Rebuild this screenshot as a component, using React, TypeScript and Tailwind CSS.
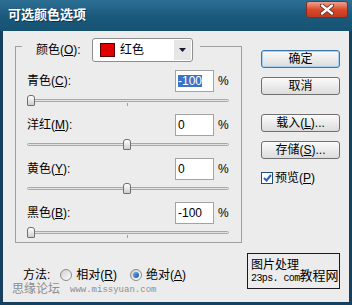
import React from "react";

const font = "font-['Liberation_Sans','Noto_Sans_CJK_SC',sans-serif]";

const rows = [
  { label: "青色", key: "C", value: -100, selected: true },
  { label: "洋红", key: "M", value: 0 },
  { label: "黄色", key: "Y", value: 0 },
  { label: "黑色", key: "B", value: -100 },
];

const Key = ({ k }: { k: string }) => (
  <>
    (<span className="underline underline-offset-1">{k}</span>)
  </>
);

const Slider = ({ value }: { value: number }) => {
  const left = ((value + 100) / 200) * 192;
  return (
    <div className="relative mt-[3px] h-[11px]">
      <div className="absolute left-0 right-0 top-[4px] h-[3px] rounded-full border border-[#a9a9a9] bg-[#e2e2e2]" />
      <div className="absolute left-[100px] top-[8px] h-[3px] w-px bg-[#a0a0a0]" />
      <div
        className="absolute top-0 h-[11px] w-[8px] rounded-t-[3px] rounded-b-[1px] border border-[#6f6f6f] bg-gradient-to-b from-white to-[#cfcfcf]"
        style={{ left }}
      />
    </div>
  );
};

const Button = ({ children, primary }: { children: React.ReactNode; primary?: boolean }) => (
  <div
    className={`flex h-[18px] w-[79px] items-center justify-center rounded-[3px] border bg-gradient-to-b from-[#fbfbfb] to-[#dcdcdc] text-[12px] leading-none text-black ${
      primary ? "border-[#3a77a8] shadow-[inset_0_0_0_1px_#a9d0ee]" : "border-[#707070]"
    }`}
  >
    {children}
  </div>
);

const Radio = ({ checked }: { checked?: boolean }) => (
  <span className="flex h-[12px] w-[12px] items-center justify-center rounded-full border border-[#8a8a8a] bg-gradient-to-br from-[#cfcfcf] to-white">
    {checked && <span className="h-[6px] w-[6px] rounded-full bg-gradient-to-br from-[#6db0ee] to-[#14539e]" />}
  </span>
);

export default function App() {
  return (
    <div className={`flex h-[305px] w-[352px] flex-col bg-[#17405e] ${font} text-[12px] text-black`}>
      {/* title bar */}
      <div className="flex h-[31px] items-start justify-between bg-gradient-to-b from-[#2d6f94] via-[#1b5a7d] to-[#165272] pl-[8px] pr-[4px]">
        <span className="mt-[7px] text-[13px] font-bold leading-[16px] text-white [text-shadow:1px_1px_0_#0b3350]">
          可选颜色选项
        </span>
        <div className="mt-px flex h-[17px] w-[42px] items-center justify-center rounded-[3px] border border-[#8a2a18] bg-gradient-to-b from-[#eea08c] via-[#d9492e] to-[#c23a1f]">
          <svg width="14" height="11" viewBox="0 0 14 11">
            <path d="M2 1.5 L12 9.5 M12 1.5 L2 9.5" stroke="#5a2418" strokeWidth="4" strokeLinecap="round" />
            <path d="M2 1.5 L12 9.5 M12 1.5 L2 9.5" stroke="#fff" strokeWidth="2.4" strokeLinecap="round" />
          </svg>
        </div>
      </div>

      {/* body */}
      <div className="mx-[3px] mb-[3px] flex flex-1 flex-col bg-[#ececec]">
        <div className="mt-[15px] flex pl-[12px]">
          {/* group box */}
          <div className="flex w-[227px] flex-col border border-[#9f9f9f] pb-[4px]">
            <div className="-mt-[9px] ml-[6px] flex w-[178px] items-center bg-[#ececec] pl-[14px]">
              <span className="w-[56px] leading-[14px]">
                颜色<Key k="O" />:
              </span>
              <div className="flex h-[24px] w-[101px] items-center rounded-[3px] border border-[#8e8e8e] bg-white pl-[7px]">
                <span className="h-[14px] w-[15px] border border-[#5a0000] bg-[#e00000]" />
                <span className="ml-[5px] leading-[14px]">红色</span>
                <span className="ml-auto mr-px flex h-[20px] w-[17px] items-center justify-center bg-[#e6e6e6]">
                  <svg width="7" height="4" viewBox="0 0 7 4">
                    <path d="M0 0 H7 L3.5 4 Z" fill="#1a1a2a" />
                  </svg>
                </span>
              </div>
            </div>

            {rows.map((r) => (
              <div key={r.key} className="mt-[8px] flex flex-col pl-[11px] pr-[12px]">
                <div className="flex h-[22px] items-center">
                  <span className="leading-[14px]">
                    {r.label}
                    <Key k={r.key} />:
                  </span>
                  <div className="ml-auto flex h-[22px] w-[39px] items-center border border-[#a3a3a3] bg-white pl-[2px]">
                    {r.selected ? (
                      <span className="bg-[#3b74c6] leading-[12px] text-white">{r.value}</span>
                    ) : (
                      <span className="leading-[14px]">{r.value}</span>
                    )}
                  </div>
                  <span className="ml-[4px] w-[11px] leading-[14px]">%</span>
                </div>
                <Slider value={r.value} />
              </div>
            ))}
          </div>

          {/* buttons */}
          <div className="ml-[19px] mt-[4px] flex w-[79px] flex-col">
            <Button primary>确定</Button>
            <div className="mt-[9px]">
              <Button>取消</Button>
            </div>
            <div className="mt-[19px]">
              <Button>
                载入<Key k="L" />...
              </Button>
            </div>
            <div className="mt-[9px]">
              <Button>
                存储<Key k="S" />...
              </Button>
            </div>
            <div className="mt-[12px] flex items-center">
              <span className="flex h-[12px] w-[12px] items-center justify-center border border-[#1c4f7a] bg-white">
                <svg width="9" height="8" viewBox="0 0 9 8">
                  <path d="M1 4 L3.5 6.5 L8 1" stroke="#2a62b8" strokeWidth="2" fill="none" />
                </svg>
              </span>
              <span className="ml-[2px] leading-[14px]">
                预览<Key k="P" />
              </span>
            </div>
          </div>
        </div>

        {/* bottom */}
        <div className="mt-[10px] flex">
          <div className="flex flex-col pt-[14px]">
            <div className="ml-[20px] flex h-[16px] items-center">
              <span className="leading-[14px]">方法:</span>
              <span className="ml-[10px]">
                <Radio />
              </span>
              <span className="ml-[4px] leading-[14px]">
                相对<Key k="R" />
              </span>
              <span className="ml-[13px]">
                <Radio checked />
              </span>
              <span className="ml-[4px] leading-[14px]">
                绝对<Key k="A" />
              </span>
            </div>
            <div className="ml-[9px] flex h-[13px] items-center">
              <span className="text-[12px] leading-[13px] text-[#8e8e8e]">思缘论坛</span>
              <span className="ml-[10px] font-['Liberation_Mono',monospace] text-[9px] leading-[10px] text-[#8e8e8e]">
                www.missyuan.com
              </span>
            </div>
          </div>
          <div className="ml-auto mr-[9px] flex h-[36px] w-[93px] shrink-0 items-end whitespace-nowrap border border-[#1a1a1a] pb-[4px] pl-[3px]">
            <div className="flex shrink-0 flex-col">
              <span className="text-[12px] leading-[15px]">图片处理</span>
              <span className="font-['Liberation_Mono',monospace] text-[10px] leading-[11px] tracking-[-0.6px]">23ps. com</span>
            </div>
            <span className="shrink-0 text-[13px] leading-[16px]">教程网</span>
          </div>
        </div>
      </div>
    </div>
  );
}
